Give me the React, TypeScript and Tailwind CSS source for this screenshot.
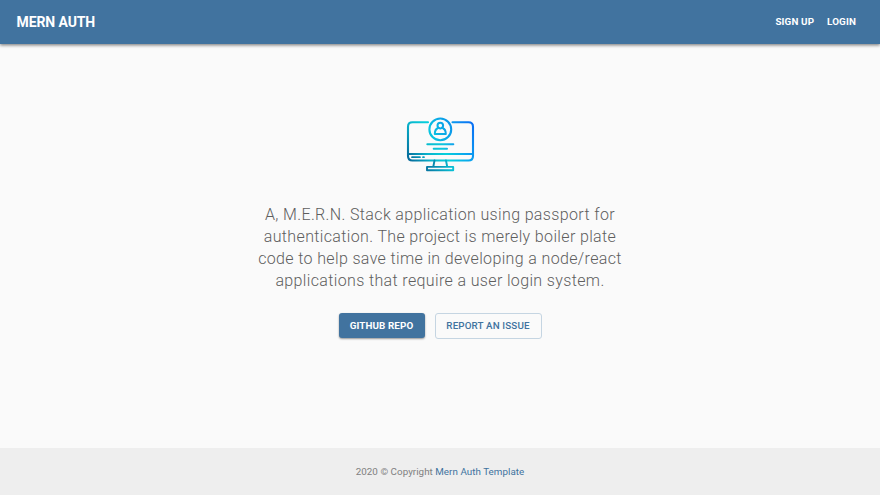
function ComputerIcon() {
  return (
    <svg className="block" width="80" height="62" viewBox="0 0 80 62" fill="none" strokeWidth="2.1" strokeLinecap="round" strokeLinejoin="round">
      <defs>
        <linearGradient id="screen" gradientUnits="userSpaceOnUse" x1="8" y1="48" x2="73" y2="8">
          <stop offset="0" stopColor="#066a9a" />
          <stop offset="0.25" stopColor="#08b4cc" />
          <stop offset="0.45" stopColor="#06d0dc" />
          <stop offset="0.7" stopColor="#0aa0f0" />
          <stop offset="1" stopColor="#0a68f4" />
        </linearGradient>
        <linearGradient id="avatar" gradientUnits="userSpaceOnUse" x1="29" y1="20" x2="52" y2="10">
          <stop offset="0" stopColor="#08c4e0" />
          <stop offset="1" stopColor="#0c90ec" />
        </linearGradient>
        <linearGradient id="lines" gradientUnits="userSpaceOnUse" x1="26" y1="0" x2="54" y2="0">
          <stop offset="0" stopColor="#08bccc" />
          <stop offset="0.6" stopColor="#0cc6de" />
          <stop offset="1" stopColor="#10a0ec" />
        </linearGradient>
        <linearGradient id="stand" gradientUnits="userSpaceOnUse" x1="26" y1="0" x2="54" y2="0">
          <stop offset="0" stopColor="#0774a0" />
          <stop offset="1" stopColor="#08c2d6" />
        </linearGradient>
      </defs>
      <g stroke="url(#screen)">
        <path d="M28 12.200H12.500Q8 12.200 8 16.700V46Q8 50.500 12.500 50.500H68.500Q73 50.500 73 46V16.700Q73 12.200 68.500 12.200H52.500" />
        <path d="M8 44H73" />
        <path d="M12 47.200H20M23 47.200H24" strokeWidth="1.700" />
      </g>
      <g stroke="url(#avatar)">
        <circle cx="40.300" cy="19.400" r="10.900" />
        <circle cx="40.300" cy="15.600" r="2.800" strokeWidth="2" />
        <path d="M37.600 18.200Q34.900 19.300 34.800 24H45.800Q45.700 19.300 43 18.200" strokeWidth="2" />
      </g>
      <g fill="url(#lines)">
        <rect x="26.300" y="33.200" width="28" height="2" rx="1" />
        <rect x="32.700" y="37.800" width="15.300" height="2" rx="1" />
      </g>
      <path d="M34.500 50.500L33.300 56.800M46 50.500L47.200 56.800M27 56.900H53.200V60.200H27Z" stroke="url(#stand)" strokeWidth="1.900" />
    </svg>
  );
}

export default function App() {
  return (
    <div className="flex h-[495px] flex-col bg-[#fafafa] font-[Roboto,sans-serif]">
      <header className="flex h-11 shrink-0 items-center justify-between bg-[#41739f] pl-[16.500px] pr-6 text-white shadow-[0_1px_3px_rgba(0,0,0,0.4),0_2px_3px_rgba(0,0,0,0.14)]">
        <a className="text-[14px] font-bold leading-5 tracking-[-0.1px]">MERN AUTH</a>
        <nav className="flex gap-[13px] text-[9.800px] font-bold leading-4 tracking-[0.14px]">
          <a>SIGN UP</a>
          <a>LOGIN</a>
        </nav>
      </header>
      <main className="flex flex-1 flex-col items-center pt-[66px]">
        <ComputerIcon />
        <p className="mt-8 whitespace-nowrap text-center text-[16px] font-light leading-[22px] tracking-[0.36px] text-[#5e5e5e]">
          A, M.E.R.N. Stack application using passport for<br />
          authentication. The project is merely boiler plate<br />
          code to help save time in developing a node/react<br />
          applications that require a user login system.
        </p>
        <div className="mt-[21px] flex gap-[10px]">
          <button className="flex h-[25px] w-[86px] items-center justify-center rounded-[3px] bg-[#41739f] text-[9.800px] font-bold leading-[15px] tracking-[0.1px] text-white shadow-[0_1px_2px_rgba(0,0,0,0.4)]">GITHUB REPO</button>
          <button className="flex h-[26px] w-[107px] items-center justify-center rounded-[3px] border border-[#c5d5e2] pb-px text-[9.800px] font-medium leading-[15px] tracking-[0.14px] text-[#41739f]">REPORT AN ISSUE</button>
        </div>
      </main>
      <footer className="flex h-[47px] shrink-0 items-center justify-center bg-[#eeeeee] pt-0.5 text-[9.800px] text-[#808080]">
        <p className="tracking-[0.04px]">2020 © Copyright <a className="text-[#41739f]">Mern Auth Template</a></p>
      </footer>
    </div>
  );
}
